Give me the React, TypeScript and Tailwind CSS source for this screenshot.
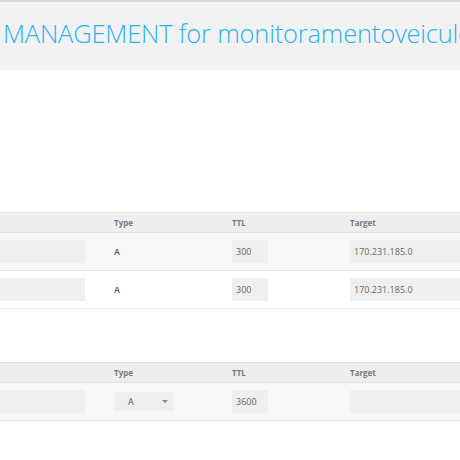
const font = { fontFamily: '"Open Sans", "Liberation Sans", sans-serif' }

type Rec = { ttl: string; target: string; type: string }

function HeaderRow() {
  return (
    <div className="flex h-[21px] items-center border-t border-b border-[#e2e2e2] bg-[#eeeeee] text-[8px] font-bold text-[#7a7a7a]">
      <div className="w-[106px]" />
      <div className="w-[118px] pl-2">Type</div>
      <div className="w-[118px] pl-2">TTL</div>
      <div className="flex-1 pl-2">Target</div>
    </div>
  )
}

function RecordRow({ rec, shaded }: { rec: Rec; shaded: boolean }) {
  return (
    <div className={`flex h-[38px] items-center border-b border-[#e6e6e6] ${shaded ? 'bg-[#f7f7f7]' : 'bg-white'}`}>
      <div className="w-[106px]">
        <div className="h-[23px] w-[85px] bg-[#efefef]" />
      </div>
      <div className="w-[118px] pl-2 text-[9px] font-semibold text-[#555]">{rec.type}</div>
      <div className="w-[118px] pl-2">
        <div className="flex h-[23px] w-[36px] items-center bg-[#efefef] pl-1 text-[9px] text-[#666]">{rec.ttl}</div>
      </div>
      <div className="flex-1 pl-2">
        <div className="flex h-[23px] items-center bg-[#efefef] pl-1 text-[9px] text-[#666]">{rec.target}</div>
      </div>
    </div>
  )
}

export default function App() {
  const records: Rec[] = [
    { type: 'A', ttl: '300', target: '170.231.185.0' },
    { type: 'A', ttl: '300', target: '170.231.185.0' },
  ]

  return (
    <div className="h-[460px] w-[460px] overflow-hidden bg-white" style={font}>
      {/* Page title bar */}
      <div className="border-t-2 border-[#d6d6d6] bg-[#f2f2f2] h-[70px] flex items-center overflow-hidden pb-[6px]">
        <h1 className="whitespace-nowrap pl-[3px] text-[25.5px] font-light tracking-[-0.2px] text-[#2bb3ec]">
          MANAGEMENT for monitoramentoveiculo.com.br
        </h1>
      </div>

      {/* Existing records */}
      <div className="mt-[142px]">
        <HeaderRow />
        {records.map((r, i) => (
          <RecordRow key={i} rec={r} shaded={i % 2 === 0} />
        ))}
      </div>

      {/* New record */}
      <div className="mt-[53px]">
        <HeaderRow />
        <div className="flex h-[38px] items-center border-b border-[#e6e6e6] bg-[#f7f7f7]">
          <div className="w-[106px]">
            <div className="h-[23px] w-[85px] bg-[#efefef]" />
          </div>
          <div className="w-[118px] pl-2">
            <div className="flex h-[19px] w-[60px] items-center justify-between bg-[#efefef] pl-[14px] pr-[6px] text-[9px] text-[#555]">
              <span>A</span>
              <span className="h-0 w-0 border-x-[3px] border-t-[3px] border-x-transparent border-t-[#888]" />
            </div>
          </div>
          <div className="w-[118px] pl-2">
            <div className="flex h-[23px] w-[36px] items-center bg-[#efefef] pl-1 text-[9px] text-[#666]">3600</div>
          </div>
          <div className="flex-1 pl-2">
            <div className="h-[23px] bg-[#efefef]" />
          </div>
        </div>
      </div>
    </div>
  )
}
